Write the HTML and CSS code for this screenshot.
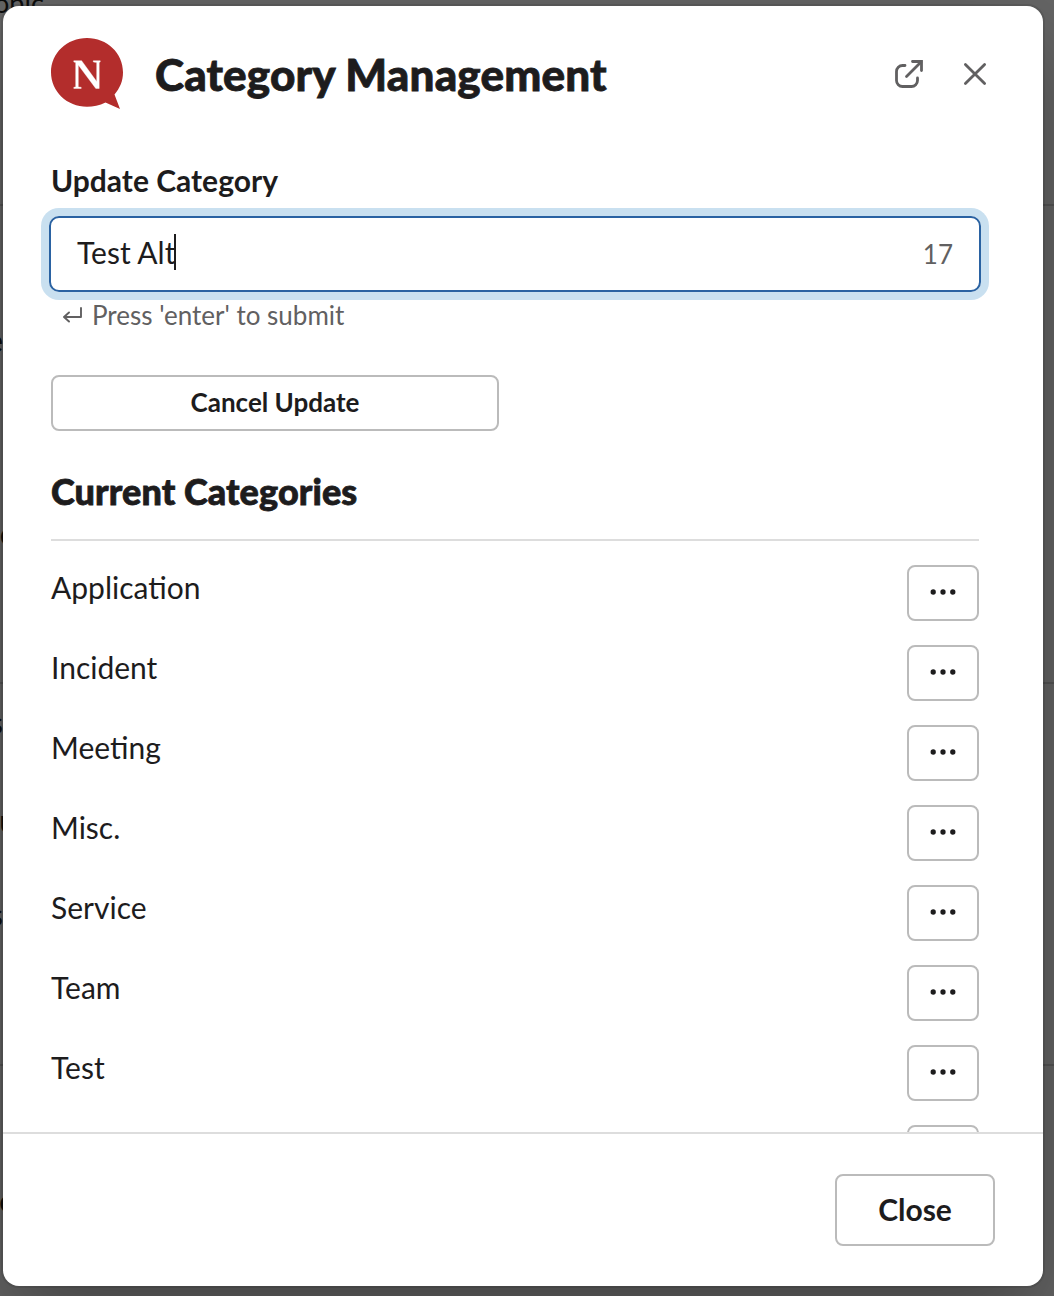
FILE: index.html
```html
<!DOCTYPE html>
<html lang="en">
<head>
<meta charset="utf-8">
<title>Category Management</title>
<link rel="stylesheet" href="styles.css">
</head>
<body>
<svg class="defs" width="0" height="0">
  <symbol id="dots" viewBox="0 0 28 8">
    <circle cx="4.200" cy="4" r="2.650"/><circle cx="14" cy="4" r="2.650"/><circle cx="23.800" cy="4" r="2.650"/>
  </symbol>
</svg>
<div class="backdrop" aria-hidden="true">
  <span class="peek peek-topic">opic</span>
  <span class="peek peek-1">e</span>
  <span class="peek peek-2">c</span>
  <span class="peek peek-3">s</span>
  <span class="peek peek-4">u</span>
  <span class="peek peek-5">s</span>
  <span class="peek peek-6">c</span>
  <i class="rule rule-1"></i>
  <i class="rule rule-2"></i>
  <i class="rule rule-3"></i>
</div>
<main class="modal">
  <header class="modal-header">
    <svg class="logo" width="72" height="72" viewBox="0 0 72 72">
      <path d="M36 0C56 0 72 15 72 34.300C72 43 69 50 63.500 56.500L69 71L54.500 64.500C48.500 67.500 42 68.800 36 68.800C16 68.800 0 53.500 0 34.300C0 15 16 0 36 0Z" fill="#b32d2c"/>
      <path d="M22.800 22.700H30.600L45.700 43.500V24.400L42.300 24V22.700H49.200V24L48.200 24.400V50.500H44.800L27.300 27V49L30.200 49.300V50.500H22.800V49.300L24.700 49V24.400L22.800 24Z" fill="#fff" stroke="#fff" stroke-width=".4"/>
    </svg>
    <h1 class="title">Category Management</h1>
    <div class="actions">
      <svg class="icon" width="32" height="32" viewBox="0 0 32 32" fill="none" stroke="#616061" stroke-width="2.800" stroke-linecap="round" stroke-linejoin="round">
        <path d="M12 7.500H9.500A6 6 0 0 0 3.500 13.500V22.500A6 6 0 0 0 9.500 28.500H18.500A6 6 0 0 0 24.500 22.500V20M13.500 18.500L28 4"/>
        <path d="M19.500 3.500H28.500V12.500" stroke-linejoin="miter"/>
      </svg>
      <svg class="icon" width="32" height="32" viewBox="0 0 32 32" fill="none" stroke="#616061" stroke-width="2.800" stroke-linecap="round">
        <path d="M6.400 6.400L25.600 25.600M25.600 6.400L6.400 25.600"/>
      </svg>
    </div>
  </header>
  <section class="modal-body">
    <div class="label">Update Category</div>
    <div class="field">
      <span class="value">Test Alt</span><span class="caret"></span>
      <span class="count">17</span>
    </div>
    <div class="hint">
      <svg width="20" height="18" viewBox="0 0 20 18" fill="none" stroke="#616061" stroke-width="1.900" stroke-linecap="round" stroke-linejoin="round">
        <path d="M18 2V11H1.500M6 6.500L1 11L6 15.500"/>
      </svg>
      <span>Press 'enter' to submit</span>
    </div>
    <button class="button cancel">Cancel Update</button>
    <h2 class="heading">Current Categories</h2>
    <ul class="list">
      <li class="row"><span>Application</span><button class="button more" aria-label="More"><svg class="dots"><use href="#dots"/></svg></button></li>
      <li class="row"><span>Incident</span><button class="button more" aria-label="More"><svg class="dots"><use href="#dots"/></svg></button></li>
      <li class="row"><span>Meeting</span><button class="button more" aria-label="More"><svg class="dots"><use href="#dots"/></svg></button></li>
      <li class="row"><span>Misc.</span><button class="button more" aria-label="More"><svg class="dots"><use href="#dots"/></svg></button></li>
      <li class="row"><span>Service</span><button class="button more" aria-label="More"><svg class="dots"><use href="#dots"/></svg></button></li>
      <li class="row"><span>Team</span><button class="button more" aria-label="More"><svg class="dots"><use href="#dots"/></svg></button></li>
      <li class="row"><span>Test</span><button class="button more" aria-label="More"><svg class="dots"><use href="#dots"/></svg></button></li>
      <li class="row"><span></span><button class="button more" aria-label="More"></button></li>
    </ul>
  </section>
  <footer class="modal-footer">
    <button class="button close">Close</button>
  </footer>
</main>
</body>
</html>
```
FILE: styles.css
```css
* { box-sizing: border-box; }

body {
  margin: 0;
  height: 1296px;
  padding: 6px 11px 10px 3px;
  overflow: hidden;
  background: #666;
  color: #1d1c1d;
  font-family: Lato, "Liberation Sans", sans-serif;
  font-size: 30px;
  line-height: 44px;
}

.defs { position: absolute; }

/* Page content showing round the edges of the dialog */
.backdrop { position: absolute; inset: 0; overflow: hidden; }
.peek { position: absolute; right: 1051px; color: #0c0c0c; line-height: 40px; }
.peek-topic { right: auto; left: -6px; top: -17px; font-size: 27px; }
.peek-1 { top: 320px; }
.peek-2 { top: 513px; right: 1040px; }
.peek-3 { top: 702px; }
.peek-4 { top: 800px; right: 1038px; }
.peek-5 { top: 894px; }
.peek-6 { top: 1180px; right: 1040px; font-weight: 900; }
.rule { position: absolute; left: 0; right: 0; height: 2px; background: #555; }
.rule-1 { top: 204px; }
.rule-2 { top: 682px; }
.rule-3 { top: 1064px; }

.modal {
  position: relative;
  display: flex;
  flex-direction: column;
  height: 1280px;
  overflow: hidden;
  border-radius: 16px;
  background: #fff;
  box-shadow: 0 0 0 2px rgba(29, 28, 29, .13), 0 36px 96px rgba(0, 0, 0, .35);
}

.modal-header {
  display: flex;
  align-items: center;
  flex: none;
  height: 136px;
  padding: 0 52px 0 48px;
}
.logo { margin-right: 32px; }
.title {
  flex: 1;
  margin: 0;
  font-size: 44px;
  font-weight: 900;
  line-height: 56px;
  letter-spacing: .16px;
  -webkit-text-stroke: .8px #1d1c1d;
}
.actions { display: flex; gap: 34px; }
.icon { display: block; }

.modal-body { flex: 1; min-height: 0; overflow: hidden; padding: 16px 64px 0 48px; }
.label { margin-bottom: 14px; font-weight: 700; }
.field {
  display: flex;
  align-items: center;
  height: 76px;
  margin: 0 -2px;
  padding: 0 26px;
  border: 2px solid #2a62a2;
  border-radius: 10px;
  box-shadow: 0 0 0 8px #c9e0f0;
}
.value { padding-bottom: 4px; }
.caret { width: 2px; height: 36px; margin: 0 0 4px -1px; background: #1d1c1d; }
.count { margin-left: auto; color: #616061; font-size: 26px; }
.hint {
  display: flex;
  align-items: center;
  gap: 9px;
  height: 44px;
  margin: 1px 0 38px;
  padding-left: 12px;
  color: #616061;
  font-size: 26px;
}

.button {
  display: flex;
  align-items: center;
  justify-content: center;
  flex: none;
  padding: 0 0 2px;
  border: 2px solid #bbb;
  border-radius: 8px;
  background: #fff;
  color: inherit;
  font: 700 26px/36px Lato, "Liberation Sans", sans-serif;
}
.cancel { width: 448px; height: 56px; }
.heading {
  height: 110px;
  margin: 0 0 24px;
  padding-top: 38px;
  border-bottom: 2px solid #ddd;
  font-size: 36px;
  font-weight: 900;
  line-height: 44px;
  letter-spacing: .1px;
  -webkit-text-stroke: .8px #1d1c1d;
}

.list { margin: 0; padding: 0; list-style: none; }
.row { display: flex; justify-content: space-between; height: 80px; line-height: 44px; }
.more { width: 72px; height: 56px; padding: 0 0 3px; }
.dots { width: 28px; height: 8px; fill: #1d1c1d; }

.modal-footer {
  display: flex;
  align-items: center;
  justify-content: flex-end;
  flex: none;
  height: 154px;
  padding-right: 48px;
  border-top: 2px solid #ddd;
}
.close { width: 160px; height: 72px; font-size: 30px; }
```
